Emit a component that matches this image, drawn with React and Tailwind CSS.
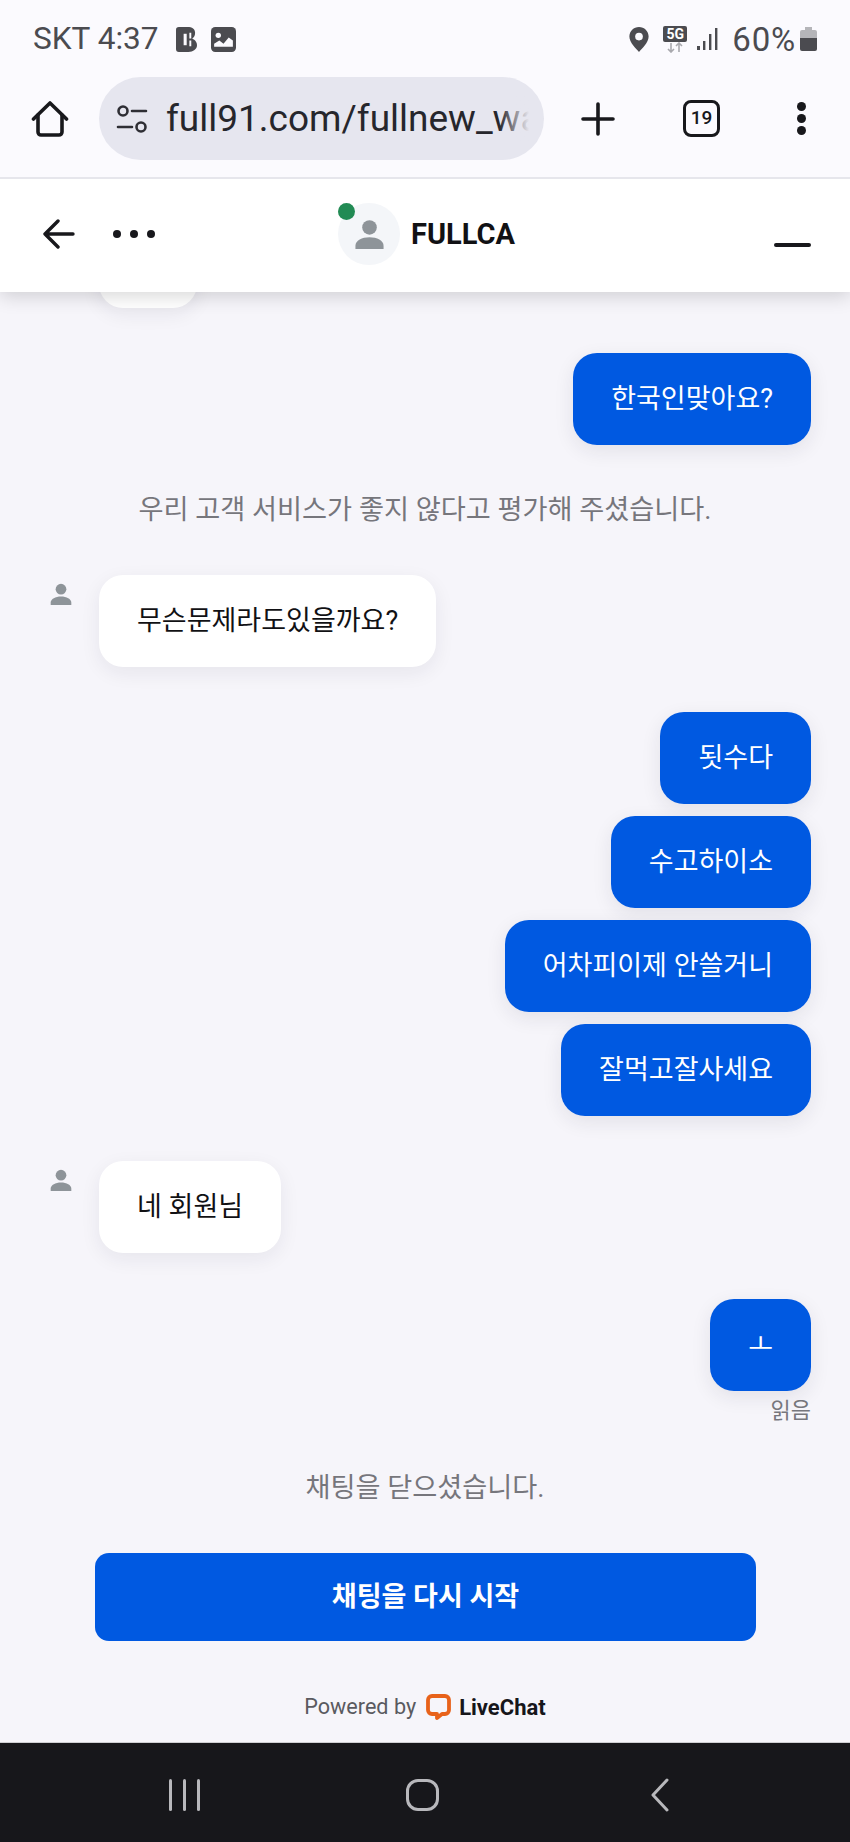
import React from 'react';

const FONT = 'font-["Roboto","Noto_Sans_CJK_KR",sans-serif]';

function Person({ className }) {
  return (
    <svg viewBox="0 0 32 32" className={className} fill="#8e9499">
      <circle cx="16" cy="9" r="7.8" />
      <path d="M1 32v-3.5C1 23 8 19.5 16 19.5S31 23 31 28.5V32z" />
    </svg>
  );
}

function BotMessage({ text, className = '', clipped }) {
  return (
    <div className={`flex items-start pl-[50px] ${className}`}>
      <div className="w-[23px] h-[23px] mr-[26px] mt-[8px] shrink-0">
        {!clipped && <Person className="w-[22px] h-[22px]" />}
      </div>
      <div className={`h-[92px] px-[38px] flex items-center rounded-[24px] bg-white text-[27px] text-[#111114] shadow-[0_6px_20px_rgba(30,30,60,0.07)] ${clipped ? 'w-[98px]' : ''}`}>
        {text}
      </div>
    </div>
  );
}

function MyMessage({ text, className = '' }) {
  return (
    <div className={`flex justify-end pr-[39px] ${className}`}>
      <div className="h-[92px] px-[38px] flex items-center rounded-[24px] bg-[#0059e1] text-[27px] text-white shadow-[0_6px_20px_rgba(30,30,60,0.09)]">
        {text}
      </div>
    </div>
  );
}

export default function App() {
  return (
    <div className={`w-[850px] h-[1842px] flex flex-col overflow-hidden bg-[#f6f5fa] ${FONT}`}>
      {/* Status bar */}
      <div className="h-[77px] shrink-0 bg-[#fbfafe] flex items-start justify-between pl-[33px] pr-[33px] pt-[19px] text-[#4b4b50]">
        <div className="flex items-center h-[40px]">
          <span className="text-[31.6px] leading-none">SKT 4:37</span>
          <svg viewBox="0 0 22 26" className="w-[21px] h-[27px] ml-[17px]">
            <path d="M0 3a3 3 0 0 1 3-3h9c5 0 8 2 8 6 0 3-1 5-3 6 2 1 5 3 5 7 0 4-4 7-9 7H3a3 3 0 0 1-3-3z" fill="#4b4b50" />
            <rect x="8" y="7" width="3.2" height="12" fill="#fbfafe" />
            <path d="M14 6h2v6h-2zM14 14h2v6h-2z" fill="#fbfafe" />
          </svg>
          <svg viewBox="0 0 24 24" className="w-[25px] h-[25px] ml-[14px]">
            <rect width="24" height="24" rx="4" fill="#4b4b50" />
            <circle cx="7" cy="8" r="2.6" fill="#fbfafe" />
            <path d="M3 19v-3l5-3 4 3 5-6 4 3v6z" fill="#fbfafe" />
          </svg>
        </div>
        <div className="flex items-center h-[40px]">
          <svg viewBox="0 0 20 26" className="w-[20px] h-[25px] mr-[14px]">
            <path d="M10 0C4.5 0 0 4.4 0 10c0 6.5 7 12.5 10 16 3-3.5 10-9.5 10-16C20 4.4 15.5 0 10 0z" fill="#4b4b50" />
            <circle cx="10" cy="10" r="4" fill="#fbfafe" />
          </svg>
          <div className="flex flex-col items-center mr-[10px] w-[24px]">
            <span className="w-[24px] h-[16px] rounded-[2px] bg-[#4b4b50] text-white text-[14px] font-bold leading-[16px] text-center">5G</span>
            <svg viewBox="0 0 18 11" className="w-[18px] h-[11px]" stroke="#a9a9ae" strokeWidth="1.6" fill="none">
              <path d="M5 1v9M2 7l3 3 3-3M13 10V1M10 4l3-3 3 3" />
            </svg>
          </div>
          <svg viewBox="0 0 22 24" className="w-[22px] h-[24px] mr-[13px]" fill="#4b4b50">
            <rect x="0" y="19" width="3" height="4" />
            <rect x="6" y="14" width="2.4" height="9" />
            <rect x="12" y="7" width="2.4" height="16" />
            <rect x="18" y="1" width="2.4" height="22" />
          </svg>
          <span className="text-[33px] leading-none tracking-[0.8px]">60%</span>
          <svg viewBox="0 0 17 24" className="w-[17px] h-[24px] ml-[4px]">
            <path d="M5 0h7v3h3a2 2 0 0 1 2 2v6H0V5a2 2 0 0 1 2-2h3z" fill="#b5b5b9" />
            <path d="M0 11h17v11a2 2 0 0 1-2 2H2a2 2 0 0 1-2-2z" fill="#4b4b50" />
          </svg>
        </div>
      </div>

      {/* Browser bar */}
      <div className="relative z-20 h-[102px] shrink-0 bg-[#fbfafe] border-b-[2px] border-[#e6e6ec] flex items-start">
        <svg viewBox="0 0 38 38" className="w-[38px] h-[38px] ml-[31px] mt-[23px]" fill="none" stroke="#18181c" strokeWidth="3.6" strokeLinejoin="round" strokeLinecap="round">
          <path d="M2.5 19 19 3l16.5 16" />
          <path d="M7 15v17a3 3 0 0 0 3 3h18a3 3 0 0 0 3-3V15" />
        </svg>
        <div className="w-[445px] h-[83px] ml-[30px] rounded-full bg-[#e6e6ef] flex items-center pl-[17px] pr-[15px]">
          <svg viewBox="0 0 32 28" className="w-[32px] h-[28px] shrink-0" fill="none" stroke="#2e2e34" strokeWidth="2.6" strokeLinecap="round">
            <circle cx="7" cy="6" r="4.5" />
            <path d="M16 6h14M2 22h14" />
            <circle cx="25" cy="22" r="4.5" />
          </svg>
          <div className="relative ml-[18px] flex-1 overflow-hidden whitespace-nowrap text-[37px] leading-[48px] text-[#26262c]">
            full91.com/fullnew_wa
            <span className="absolute right-0 top-0 w-[30px] h-full bg-gradient-to-r from-[#e6e6ef00] to-[#e6e6ef]" />
          </div>
        </div>
        <svg viewBox="0 0 34 34" className="w-[34px] h-[34px] ml-[37px] mt-[25px]" stroke="#18181c" strokeWidth="3.6" strokeLinecap="round">
          <path d="M17 2v30M2 17h30" />
        </svg>
        <div className="w-[37px] h-[37px] ml-[68px] mt-[23px] rounded-[8px] border-[3.5px] border-[#18181c] flex items-center justify-center text-[19px] font-medium text-[#18181c]">
          19
        </div>
        <div className="ml-[77px] mt-[25px] flex flex-col gap-[3px]">
          <span className="w-[9px] h-[9px] rounded-full bg-[#18181c]" />
          <span className="w-[9px] h-[9px] rounded-full bg-[#18181c]" />
          <span className="w-[9px] h-[9px] rounded-full bg-[#18181c]" />
        </div>
      </div>

      {/* Chat header */}
      <div className="relative z-10 h-[113px] shrink-0 bg-white shadow-[0_4px_18px_rgba(0,0,0,0.16)] flex items-center">
        <svg viewBox="0 0 32 30" className="w-[32px] h-[30px] ml-[43px] mt-[-3px]" fill="none" stroke="#18181c" strokeWidth="3.4" strokeLinecap="round" strokeLinejoin="round">
          <path d="M30 15H2M15 2 2 15l13 13" />
        </svg>
        <div className="flex gap-[9px] ml-[38px] mt-[-3px]">
          <span className="w-[8px] h-[8px] rounded-full bg-[#18181c]" />
          <span className="w-[8px] h-[8px] rounded-full bg-[#18181c]" />
          <span className="w-[8px] h-[8px] rounded-full bg-[#18181c]" />
        </div>
        <div className="relative w-[62px] h-[62px] ml-[183px] mt-[-3px] rounded-full bg-[#f4f6f9] flex items-center justify-center">
          <Person className="w-[31px] h-[30px]" />
          <span className="absolute left-[0px] top-[0px] w-[17px] h-[17px] rounded-full bg-[#228b54]" />
        </div>
        <span className="ml-[11px] mt-[-3px] text-[29px] font-bold leading-none text-[#111114]">FULLCA</span>
        <span className="ml-auto mr-[39px] mt-[19px] w-[37px] h-[4px] rounded-full bg-[#18181c]" />
      </div>

      {/* Messages */}
      <div className="flex-1 min-h-0 flex flex-col justify-end overflow-hidden">
        <BotMessage text="" clipped className="shrink-0" />
        <MyMessage text="한국인맞아요?" className="mt-[45px] shrink-0" />
        <div className="mt-[47px] h-[36px] shrink-0 flex items-center justify-center text-[27.2px] text-[#76767c]">
          우리 고객 서비스가 좋지 않다고 평가해 주셨습니다.
        </div>
        <BotMessage text="무슨문제라도있을까요?" className="mt-[47px] shrink-0" />
        <MyMessage text="됫수다" className="mt-[45px] shrink-0" />
        <MyMessage text="수고하이소" className="mt-[12px] shrink-0" />
        <MyMessage text="어차피이제 안쓸거니" className="mt-[12px] shrink-0" />
        <MyMessage text="잘먹고잘사세요" className="mt-[12px] shrink-0" />
        <BotMessage text="네 회원님" className="mt-[45px] shrink-0" />
        <MyMessage text="ㅗ" className="mt-[46px] shrink-0" />
        <div className="mt-[5px] pr-[39px] h-[28px] shrink-0 flex items-center justify-end text-[22px] text-[#76767c]">읽음</div>
        <div className="mt-[46px] h-[36px] shrink-0 flex items-center justify-center text-[27.2px] text-[#76767c]">
          채팅을 닫으셨습니다.
        </div>
        <div className="mt-[47px] shrink-0 pl-[95px] pr-[94px]">
          <button className="w-full h-[88px] rounded-[14px] bg-[#0059e1] text-white text-[27px] font-bold">
            채팅을 다시 시작
          </button>
        </div>
        <div className="mt-[52px] mb-[21px] h-[28px] shrink-0 flex items-center justify-center">
          <span className="text-[21.6px] text-[#5a5a60]">Powered by</span>
          <svg viewBox="0 0 25 26" className="w-[25px] h-[26px] ml-[10px]" fill="none">
            <path d="M6 2h13a4 4 0 0 1 4 4v10a4 4 0 0 1-4 4h-3l-5 4v-4H6a4 4 0 0 1-4-4V6a4 4 0 0 1 4-4z" stroke="#e8621a" strokeWidth="3.8" strokeLinejoin="round" />
          </svg>
          <span className="ml-[8px] text-[22px] font-bold text-[#16161a]">LiveChat</span>
        </div>
      </div>

      {/* Android nav bar */}
      <div className="h-[100px] shrink-0 bg-[#17171b] border-t border-[#cfcfd2] relative flex items-start">
        <div className="ml-[169px] mt-[36px] flex gap-[11px]">
          <span className="w-[3px] h-[32px] bg-[#b8b8bc] rounded-full" />
          <span className="w-[3px] h-[32px] bg-[#b8b8bc] rounded-full" />
          <span className="w-[3px] h-[32px] bg-[#b8b8bc] rounded-full" />
        </div>
        <span className="ml-[206px] mt-[36px] w-[33px] h-[32px] rounded-[12px] border-[3px] border-[#b8b8bc]" />
        <svg viewBox="0 0 20 34" className="ml-[211px] mt-[35px] w-[20px] h-[34px]" fill="none" stroke="#b8b8bc" strokeWidth="3" strokeLinecap="round" strokeLinejoin="round">
          <path d="M17 2 3 17l14 15" />
        </svg>
      </div>
    </div>
  );
}
